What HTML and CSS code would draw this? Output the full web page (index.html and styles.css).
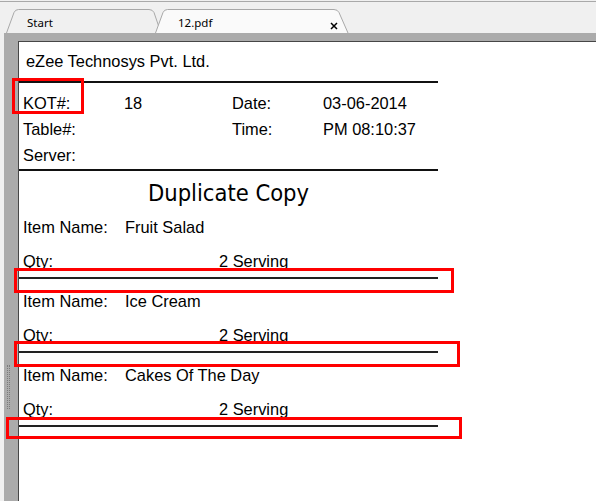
FILE: index.html
```html
<!DOCTYPE html>
<html lang="en">
<head>
    <meta charset="UTF-8">
    <title>12.pdf</title>
    <link rel="stylesheet" href="styles.css">
</head>
<body>
    <div class="tabbar">
        <div class="tab tab-start">
            <svg class="tab-shape" width="155" height="24" viewBox="0 0 155 24">
                <path d="M0.5 24 L8 3.5 Q9.3 0.5 12.5 0.5 L143 0.5 Q146.5 0.5 148 3.5 L155 24" fill="#f0f0f0" stroke="#a8a8a8"/>
            </svg>
            <span class="tab-label">Start</span>
        </div>
        <div class="tab tab-active">
            <svg class="tab-shape" width="194" height="24" viewBox="0 0 194 24">
                <path d="M0.5 24 L8 3.5 Q9.3 0.5 12.5 0.5 L179 0.5 Q182.5 0.5 184 3.5 L193 24" fill="#fafafa" stroke="#a8a8a8"/>
            </svg>
            <span class="tab-label">12.pdf</span>
            <svg class="tab-close" width="8" height="8" viewBox="0 0 8 8">
                <path d="M1 1 L7 7 M7 1 L1 7" stroke="#000" stroke-width="1.5"/>
            </svg>
        </div>
    </div>

    <div class="viewer">
        <div class="gutter">
            <div class="grip"></div>
        </div>
        <div class="page">
            <div class="company">eZee Technosys Pvt. Ltd.</div>

            <div class="meta">
                <div>KOT#:</div><div>18</div><div>Date:</div><div>03-06-2014</div>
                <div>Table#:</div><div></div><div>Time:</div><div>PM 08:10:37</div>
                <div>Server:</div><div></div><div></div><div></div>
            </div>

            <div class="title">Duplicate Copy</div>

            <div class="item">
                <div class="item-row"><span class="item-label">Item Name:</span><span>Fruit Salad</span></div>
                <div class="qty-row"><span class="qty-label">Qty:</span><span>2 Serving</span></div>
            </div>
            <div class="item">
                <div class="item-row"><span class="item-label">Item Name:</span><span>Ice Cream</span></div>
                <div class="qty-row"><span class="qty-label">Qty:</span><span>2 Serving</span></div>
            </div>
            <div class="item">
                <div class="item-row"><span class="item-label">Item Name:</span><span>Cakes Of The Day</span></div>
                <div class="qty-row"><span class="qty-label">Qty:</span><span>2 Serving</span></div>
            </div>
        </div>
    </div>

    <!-- annotation boxes drawn over the screenshot -->
    <div class="mark mark-kot"></div>
    <div class="mark mark-line1"></div>
    <div class="mark mark-line2"></div>
    <div class="mark mark-line3"></div>
</body>
</html>
```

FILE: styles.css
```css
html, body {
    margin: 0;
    height: 501px;
    overflow: hidden;
}
body {
    padding-top: 1px;
    box-sizing: border-box;
    background-color: #f0f0f0;
    font-family: "Liberation Sans", Arial, sans-serif;
    color: #000;
    position: relative;
}

/* tabs */
.tabbar {
    display: flex;
    border-top: 1px solid #a9a9a9;
    padding: 7px 0 0 6px;
    height: 24px;
}
.tab {
    position: relative;
    height: 24px;
    font-family: "Noto Sans", "Open Sans", sans-serif;
    font-size: 11.5px;
    color: #000;
}
.tab-shape {
    position: absolute;
    left: 0;
    top: 0;
}
.tab-label {
    position: relative;
    display: block;
    line-height: 16px;
    padding-top: 6px;
}
.tab-start {
    width: 155px;
    padding-left: 21px;
    box-sizing: border-box;
}
.tab-active {
    width: 194px;
    margin-left: -6px;
    padding-left: 23px;
    box-sizing: border-box;
}
.tab-close {
    position: absolute;
    left: 175px;
    top: 13px;
}

/* viewer */
.viewer {
    display: flex;
    margin-left: 4px;
    padding-top: 8px;
    height: 468px;
    box-sizing: border-box;
    background-color: #ababab;
}
.gutter {
    width: 14px;
    flex-shrink: 0;
}
.grip {
    width: 1px;
    height: 44px;
    margin: 324px 0 0 3px;
    border-left: 1px dotted #7a7a7a;
    border-right: 1px dotted #7a7a7a;
}
.page {
    flex: 1;
    background-color: #fff;
    border-top: 1px solid #474747;
    border-left: 1px solid #474747;
    padding-top: 6px;
    font-size: 16.4px;
}
.page > div {
    width: 419px;
    box-sizing: border-box;
}
.company {
    line-height: 26px;
    padding-left: 7px;
    padding-bottom: 7px;
    border-bottom: 2px solid #111;
}
.meta {
    display: grid;
    grid-template-columns: 101px 108px 91px auto;
    grid-auto-rows: 26px;
    align-items: center;
    padding: 7px 0 1px 4px;
    border-bottom: 2px solid #111;
}
.title {
    text-align: center;
    font-family: "DejaVu Sans Condensed", "DejaVu Sans", sans-serif;
    font-stretch: condensed;
    font-size: 23.5px;
    line-height: 30px;
    padding-top: 7px;
}
.item {
    padding: 6px 0 0 4px;
}
.item + .item {
    padding-top: 9px;
}
.item-row,
.qty-row {
    display: flex;
    line-height: 26px;
}
.item-row {
    margin-bottom: 8px;
}
.qty-row {
    margin-bottom: 3px;
}
.item::after {
    content: "";
    display: block;
    height: 2px;
    margin-left: -4px;
    background-color: #222;
}
.item-label {
    width: 102px;
    flex-shrink: 0;
}
.qty-label {
    width: 196px;
    flex-shrink: 0;
}

/* red marks */
.mark {
    position: absolute;
    border: 3px solid #f00;
    box-sizing: border-box;
}
.mark-kot {
    left: 12px;
    top: 78px;
    width: 72px;
    height: 36px;
}
.mark-line1 {
    left: 14px;
    top: 268px;
    width: 440px;
    height: 25px;
}
.mark-line2 {
    left: 14px;
    top: 341px;
    width: 446px;
    height: 26px;
}
.mark-line3 {
    left: 6px;
    top: 417px;
    width: 456px;
    height: 22px;
}
```
